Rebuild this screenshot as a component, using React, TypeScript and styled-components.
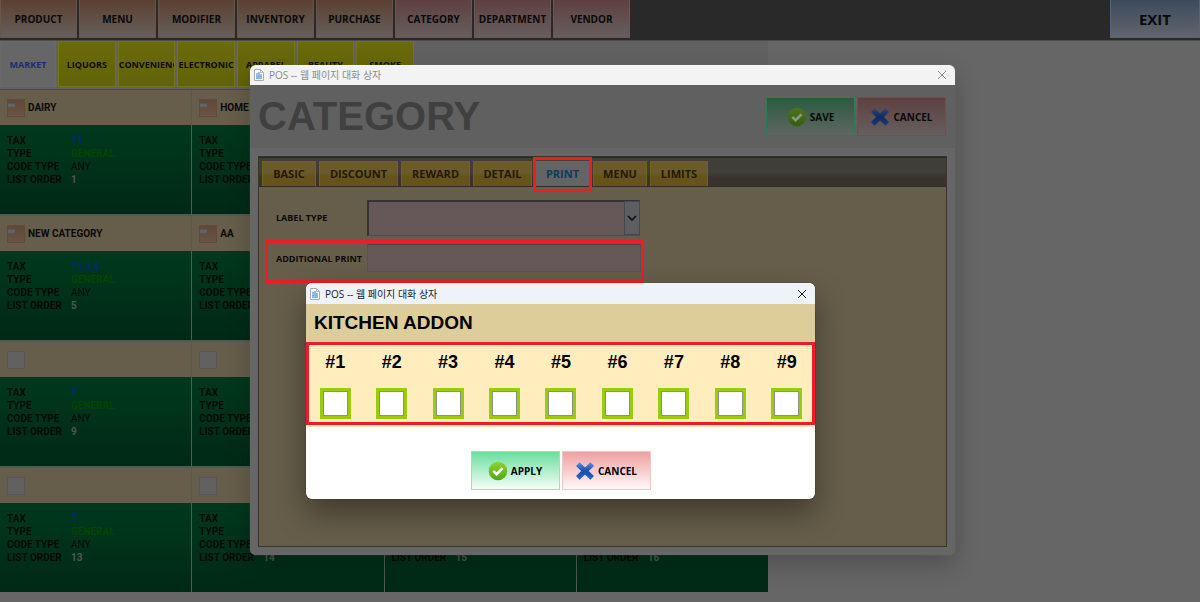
import React from "react";
import styled, { createGlobalStyle, css } from "styled-components";

const ui = `"Open Sans", "Noto Sans", sans-serif`;
const arial = `"Liberation Sans", Arial, sans-serif`;
const compact = `Roboto, "Liberation Sans", sans-serif`;

const GlobalStyle = createGlobalStyle`
  *, *::before, *::after { box-sizing: border-box; }
  body { margin: 0; background: #666; font-family: ${arial}; color: #0a0a0a; }
  button, input, select { font: inherit; color: inherit; margin: 0; padding: 0; border-radius: 0; }
  h1, h2, h3, p, dl, dd { margin: 0; }
`;

const Screen = styled.div`
  position: relative;
  min-height: 100vh;
  overflow: hidden;
`;

/* ---------- top navigation ---------- */

const TopNav = styled.nav`
  display: flex;
  gap: 2px;
  height: 41px;
  padding-bottom: 2px;
  background: #292929;
  border-bottom: 1px solid #4c4c4c;
`;

const navTones = {
  brown: css`background: linear-gradient(#5c4031, #655f5c); border-color: #6a5546;`,
  rose: css`background: linear-gradient(#5f4040, #665e5e); border-color: #6e5555;`,
  blue: css`background: linear-gradient(#3d4a5e, #62656a); border-color: #4f6680;`,
};

const NavButton = styled.button<{ $tone: keyof typeof navTones }>`
  width: 77px;
  border: 1px solid;
  border-top: 0;
  font: bold 10px ${ui};
  text-align: center;
  ${(p) => navTones[p.$tone]}
`;

const ExitButton = styled(NavButton)`
  width: 90px;
  margin-left: auto;
  font-size: 15px;
`;

/* ---------- department tabs ---------- */

const Catalog = styled.main`
  width: 64%;
`;

const DeptStrip = styled.div`
  height: 49px;
  padding-bottom: 2px;
  background: #616161;
  border-bottom: 1px solid #2c5848;
`;

const DeptTabs = styled.div`
  display: grid;
  grid-template-columns: 56px repeat(6, minmax(0, 1fr));
  gap: 2px;
  width: 414px;
  height: 46px;
`;

const DeptTab = styled.button<{ $active?: boolean }>`
  border: 1px solid ${(p) => (p.$active ? "#696969" : "#74741c")};
  background: ${(p) => (p.$active ? "#666" : "linear-gradient(#6a6a0c, #626207)")};
  color: ${(p) => (p.$active ? "#1c2c78" : "#0c0c02")};
  font: bold 9px ${ui};
  overflow: hidden;
  white-space: nowrap;
`;

/* ---------- category cards ---------- */

const CardGrid = styled.div`
  display: grid;
  grid-template-columns: repeat(4, minmax(0, 1fr));
  gap: 2px 1px;
  background: #525a56;
`;

const Card = styled.article`
  height: 124px;
  display: flex;
  flex-direction: column;
`;

const CardHead = styled.header`
  display: flex;
  align-items: center;
  gap: 3px;
  height: 35px;
  padding: 0 7px;
  background: #665e4a;
`;

const CardName = styled.h3`
  font: bold 10px ${compact};
`;

const Swatch = styled.span<{ $filled: boolean }>`
  width: 18px;
  height: 18px;
  border: 1px solid ${(p) => (p.$filled ? "#604a3c" : "#565656")};
  background: ${(p) => (p.$filled ? "linear-gradient(#604838, #6a5444)" : "#616161")};
`;

const SwatchMark = styled.span`
  display: block;
  width: 7px;
  height: 4px;
  margin-top: 3px;
  background: #5c6668;
  border-top: 1px solid #40606a;
`;

const CardBody = styled.dl`
  flex: 1;
  display: grid;
  grid-template-columns: 64px 1fr;
  grid-auto-rows: 13px;
  padding: 9px 7px;
  background: linear-gradient(#00391d, #002916);
  font: 10px/14px ${compact};
`;

const FieldName = styled.dt`
  font-weight: bold;
  color: #020a05;
  white-space: nowrap;
`;

const FieldValue = styled.dd<{ $color: string; $bold?: boolean }>`
  color: ${(p) => p.$color};
  font-weight: ${(p) => (p.$bold ? "bold" : "normal")};
`;

/* ---------- dialog windows ---------- */

const Dialog = styled.section`
  position: absolute;
  display: flex;
  flex-direction: column;
  border-radius: 6px;
  overflow: hidden;
`;

const CategoryDialog = styled(Dialog)`
  left: 250px;
  top: 65px;
  width: 705px;
  height: 490px;
  background: #666;
  box-shadow: 0 10px 24px rgba(0, 0, 0, 0.22), 0 0 1px #888;
`;

const AddonDialog = styled(Dialog)`
  left: 306px;
  top: 283px;
  width: 509px;
  background: #fff;
  box-shadow: 0 14px 30px rgba(0, 0, 0, 0.38), 0 0 1px #222;
`;

const TitleBar = styled.div<{ $active?: boolean }>`
  display: flex;
  align-items: center;
  gap: 4px;
  height: ${(p) => (p.$active ? 21 : 20)}px;
  padding: 0 8px 0 3px;
  background: ${(p) => (p.$active ? "#eef3fa" : "#f3f3f3")};
  color: ${(p) => (p.$active ? "#1a1a1a" : "#8c8c8c")};
  font: 10px/18px "Open Sans", "Noto Sans CJK KR", sans-serif;
`;

const CloseButton = styled.button`
  display: flex;
  margin-left: auto;
  border: 0;
  background: none;
`;

const DialogHead = styled.header`
  display: flex;
  align-items: center;
  gap: 2px;
  height: 63px;
  padding: 0 9px 0 8px;
  background: #606060;
`;

const DialogTitle = styled.h1`
  margin-right: auto;
  font: bold 40px ${arial};
  color: #404040;
`;

const actionTones = {
  saveDim: css`background: linear-gradient(#2b5b40, #5f6662); border-color: #37774f;`,
  cancelDim: css`background: linear-gradient(#5f4040, #665f5f); border-color: #6d5151;`,
  save: css`background: linear-gradient(#6ade9d, #f6fdf9); border-color: #97e6b2;`,
  cancel: css`background: linear-gradient(#efa0a0, #fff8f8); border-color: #ecc6c8;`,
};

const ActionButton = styled.button<{ $tone: keyof typeof actionTones }>`
  display: flex;
  align-items: center;
  justify-content: center;
  gap: 3px;
  width: 89px;
  height: 39px;
  border: 1px solid;
  font: bold 10px ${ui};
  ${(p) => actionTones[p.$tone]}
`;

const Panel = styled.div`
  flex: 1;
  display: flex;
  flex-direction: column;
  margin: 8px;
  border: 1px solid #3a352b;
  background: linear-gradient(#666259, #665e4a 46px);
`;

const TabBar = styled.div`
  display: flex;
  align-items: flex-end;
  gap: 3px;
  height: 30px;
  padding-left: 3px;
  background: linear-gradient(#403e38 50%, #38342d 70%);
  border-top: 1px solid #292723;
  border-bottom: 1px solid #302d28;
`;

const Tab = styled.button<{ $w: number; $active?: boolean }>`
  position: relative;
  width: ${(p) => p.$w}px;
  height: 25px;
  padding-bottom: 2px;
  border: 1px solid ${(p) => (p.$active ? "#666" : "#76601f")};
  border-bottom: 0;
  background: ${(p) => (p.$active ? "#646464" : "linear-gradient(#6b5a2b 45%, #66531c 60%)")};
  color: ${(p) => (p.$active ? "#0a3c62" : "#251906")};
  font: bold 11px ${ui};
`;

const TabMarker = styled.span`
  position: absolute;
  inset: -5px -3px -6px;
  border: 3px solid #ee1c25;
`;

const Form = styled.form`
  display: flex;
  flex-direction: column;
  align-items: flex-start;
  padding: 13px 6px;
`;

const FormRow = styled.div<{ $marked?: boolean }>`
  display: flex;
  align-items: ${(p) => (p.$marked ? "flex-start" : "center")};
  width: 379px;
  height: ${(p) => (p.$marked ? 43 : 40)}px;
  padding: 0 0 4px 11px;
  ${(p) => p.$marked && css`padding-top: 4px; box-shadow: inset 0 0 0 3px #ee1c25;`}
`;

const FormLabel = styled.label`
  width: 91px;
  font: bold 9px/30px ${ui};
  white-space: nowrap;
`;

const SelectWrap = styled.div`
  position: relative;
  width: 273px;
  height: 36px;
`;

const Select = styled.select`
  appearance: none;
  width: 100%;
  height: 100%;
  border: 1px solid #4c4c50;
  border-top: 2px solid #333336;
  border-left: 2px solid #333336;
  background: #665858;
`;

const SelectArrow = styled.span`
  position: absolute;
  top: 1px;
  right: 0;
  bottom: 1px;
  width: 16px;
  display: flex;
  align-items: center;
  justify-content: center;
  background: #5c5e60;
  border: 1px solid #45484d;
  pointer-events: none;
`;

const TextInput = styled.input`
  width: 274px;
  height: 28px;
  border: 1px solid #565256;
  border-top-color: #464448;
  background: #665858;
`;

/* ---------- kitchen addon ---------- */

const AddonTitle = styled.h2`
  height: 38px;
  padding-left: 8px;
  background: #dccd9b;
  color: #000;
  font: bold 19px/38px ${arial};
`;

const PrinterBand = styled.div`
  padding-bottom: 2px;
  background: #ffedbd;
`;

const PrinterGrid = styled.div`
  display: grid;
  grid-template-columns: repeat(9, minmax(0, 1fr));
  height: 83px;
  padding: 10px 0 0 1px;
  box-shadow: inset 0 0 0 3px #ee1c25;
`;

const Printer = styled.label`
  display: flex;
  flex-direction: column;
  align-items: center;
  gap: 16px;
  color: #000;
  font: bold 18px/20px ${arial};
`;

const PrinterCheck = styled.input`
  appearance: none;
  width: 31px;
  height: 31px;
  border: 3px solid #99cc0a;
  background: #fff;
  box-shadow: inset 0 0 0 1px #8c8c8c;
`;

const DialogActions = styled.footer`
  display: flex;
  justify-content: center;
  gap: 2px;
  padding: 24px 0 9px;
  color: #000;
`;

/* ---------- icons ---------- */

const PageIcon = () => (
  <svg width="12" height="14" viewBox="0 0 12 14" aria-hidden="true">
    <path d="M1.500 1.500h6l3 3v8h-9z" fill="#fafcff" stroke="#a4abb4" strokeWidth="1" />
    <path d="M3 5h2v-1h2v2h2v5h-6z" fill="#8fbfe6" />
    <path d="M3 8.500h6M3 10.500h6" stroke="#6fa0d0" strokeWidth=".5" />
    <path d="M7.500 1.500v3h3" fill="none" stroke="#a4abb4" strokeWidth=".8" />
  </svg>
);

const CloseIcon = () => (
  <svg width="10" height="10" viewBox="0 0 10 10" aria-hidden="true">
    <path d="M1 1l8 8M9 1l-8 8" stroke="currentColor" strokeWidth="1" fill="none" />
  </svg>
);

const CheckIcon = ({ dim = false }: { dim?: boolean }) => {
  const id = dim ? "check-dim" : "check";
  return (
    <svg width="20" height="20" viewBox="0 0 20 20" aria-hidden="true">
      <defs>
        <linearGradient id={id} x1="0" y1="0" x2="0" y2="1">
          <stop offset="0" stopColor={dim ? "#4e7420" : "#8ed32e"} />
          <stop offset="1" stopColor={dim ? "#355d10" : "#54a818"} />
        </linearGradient>
      </defs>
      <circle cx="10" cy="10" r="9.300" fill={`url(#${id})`} />
      <path d="M5.300 9.800l3.300 3.300 6-5.800" fill="none" stroke={dim ? "#8e9488" : "#fff"} strokeWidth="2.600" />
    </svg>
  );
};

const CrossIcon = ({ dim = false }: { dim?: boolean }) => {
  const id = dim ? "cross-dim" : "cross";
  return (
    <svg width="20" height="20" viewBox="0 0 20 20" aria-hidden="true">
      <defs>
        <linearGradient id={id} gradientUnits="userSpaceOnUse" x1="0" y1="1" x2="0" y2="19">
          <stop offset="0" stopColor={dim ? "#2e4a80" : "#5a94e8"} />
          <stop offset=".5" stopColor={dim ? "#122a5c" : "#1c4cac"} />
          <stop offset="1" stopColor={dim ? "#1a3a80" : "#2464d8"} />
        </linearGradient>
      </defs>
      <path
        d="M2.800 3.200L17.200 16.800M17.200 3.200L2.800 16.800"
        fill="none"
        stroke={`url(#${id})`}
        strokeWidth="5.200"
      />
    </svg>
  );
};

const ChevronIcon = () => (
  <svg width="10" height="7" viewBox="0 0 10 7" aria-hidden="true">
    <path d="M1 1l4 4 4-4" fill="none" stroke="#101010" strokeWidth="1.700" />
  </svg>
);

/* ---------- data ---------- */

const navItems: { label: string; tone: "brown" | "rose" }[] = [
  { label: "PRODUCT", tone: "brown" },
  { label: "MENU", tone: "brown" },
  { label: "MODIFIER", tone: "brown" },
  { label: "INVENTORY", tone: "brown" },
  { label: "PURCHASE", tone: "brown" },
  { label: "CATEGORY", tone: "rose" },
  { label: "DEPARTMENT", tone: "rose" },
  { label: "VENDOR", tone: "rose" },
];

const departments = ["MARKET", "LIQUORS", "CONVENIENC", "ELECTRONIC", "APPAREL", "BEAUTY", "SMOKE"];

const named: Record<number, { name: string; tax: string }> = {
  1: { name: "DAIRY", tax: "T1" },
  2: { name: "HOME", tax: "T1" },
  5: { name: "NEW CATEGORY", tax: "T1,3,4" },
  6: { name: "AA", tax: "T" },
};

const cards = Array.from({ length: 16 }, (_, i) => ({
  order: i + 1,
  name: named[i + 1]?.name ?? "",
  tax: named[i + 1]?.tax ?? "T",
}));

const tabs = [
  { label: "BASIC", width: 54 },
  { label: "DISCOUNT", width: 79 },
  { label: "REWARD", width: 69 },
  { label: "DETAIL", width: 59 },
  { label: "PRINT", width: 55 },
  { label: "MENU", width: 54 },
  { label: "LIMITS", width: 58 },
];

const windowTitle = "POS -- 웹 페이지 대화 상자";

export default function App() {
  return (
    <Screen>
      <GlobalStyle />
      <TopNav>
        {navItems.map((n) => (
          <NavButton key={n.label} $tone={n.tone}>{n.label}</NavButton>
        ))}
        <ExitButton $tone="blue">EXIT</ExitButton>
      </TopNav>

      <Catalog>
        <DeptStrip>
          <DeptTabs>
            {departments.map((d, i) => (
              <DeptTab key={d} $active={i === 0}>{d}</DeptTab>
            ))}
          </DeptTabs>
        </DeptStrip>
        <CardGrid>
          {cards.map((c) => (
            <Card key={c.order}>
              <CardHead>
                <Swatch $filled={c.name !== ""}>{c.name !== "" && <SwatchMark />}</Swatch>
                <CardName>{c.name}</CardName>
              </CardHead>
              <CardBody>
                <FieldName>TAX</FieldName>
                <FieldValue $color="#07286f" $bold>{c.tax}</FieldValue>
                <FieldName>TYPE</FieldName>
                <FieldValue $color="#034503" $bold>GENERAL</FieldValue>
                <FieldName>CODE TYPE</FieldName>
                <FieldValue $color="#020a05">ANY</FieldValue>
                <FieldName>LIST ORDER</FieldName>
                <FieldValue $color="#4c5850" $bold>{c.order}</FieldValue>
              </CardBody>
            </Card>
          ))}
        </CardGrid>
      </Catalog>

      <CategoryDialog role="dialog" aria-label="Category">
        <TitleBar>
          <PageIcon />
          <span>{windowTitle}</span>
          <CloseButton aria-label="Close"><CloseIcon /></CloseButton>
        </TitleBar>
        <DialogHead>
          <DialogTitle>CATEGORY</DialogTitle>
          <ActionButton $tone="saveDim"><CheckIcon dim />SAVE</ActionButton>
          <ActionButton $tone="cancelDim"><CrossIcon dim />CANCEL</ActionButton>
        </DialogHead>
        <Panel>
          <TabBar role="tablist">
            {tabs.map((t) => (
              <Tab key={t.label} role="tab" aria-selected={t.label === "PRINT"} $w={t.width} $active={t.label === "PRINT"}>
                {t.label}
                {t.label === "PRINT" && <TabMarker />}
              </Tab>
            ))}
          </TabBar>
          <Form>
            <FormRow>
              <FormLabel htmlFor="label-type">LABEL TYPE</FormLabel>
              <SelectWrap>
                <Select id="label-type" />
                <SelectArrow><ChevronIcon /></SelectArrow>
              </SelectWrap>
            </FormRow>
            <FormRow $marked>
              <FormLabel htmlFor="additional-print">ADDITIONAL PRINT</FormLabel>
              <TextInput id="additional-print" type="text" />
            </FormRow>
          </Form>
        </Panel>
      </CategoryDialog>

      <AddonDialog role="dialog" aria-label="Kitchen addon">
        <TitleBar $active>
          <PageIcon />
          <span>{windowTitle}</span>
          <CloseButton aria-label="Close"><CloseIcon /></CloseButton>
        </TitleBar>
        <AddonTitle>KITCHEN ADDON</AddonTitle>
        <PrinterBand>
          <PrinterGrid>
            {Array.from({ length: 9 }, (_, i) => (
              <Printer key={i}>
                #{i + 1}
                <PrinterCheck type="checkbox" />
              </Printer>
            ))}
          </PrinterGrid>
        </PrinterBand>
        <DialogActions>
          <ActionButton $tone="save"><CheckIcon />APPLY</ActionButton>
          <ActionButton $tone="cancel"><CrossIcon />CANCEL</ActionButton>
        </DialogActions>
      </AddonDialog>
    </Screen>
  );
}
